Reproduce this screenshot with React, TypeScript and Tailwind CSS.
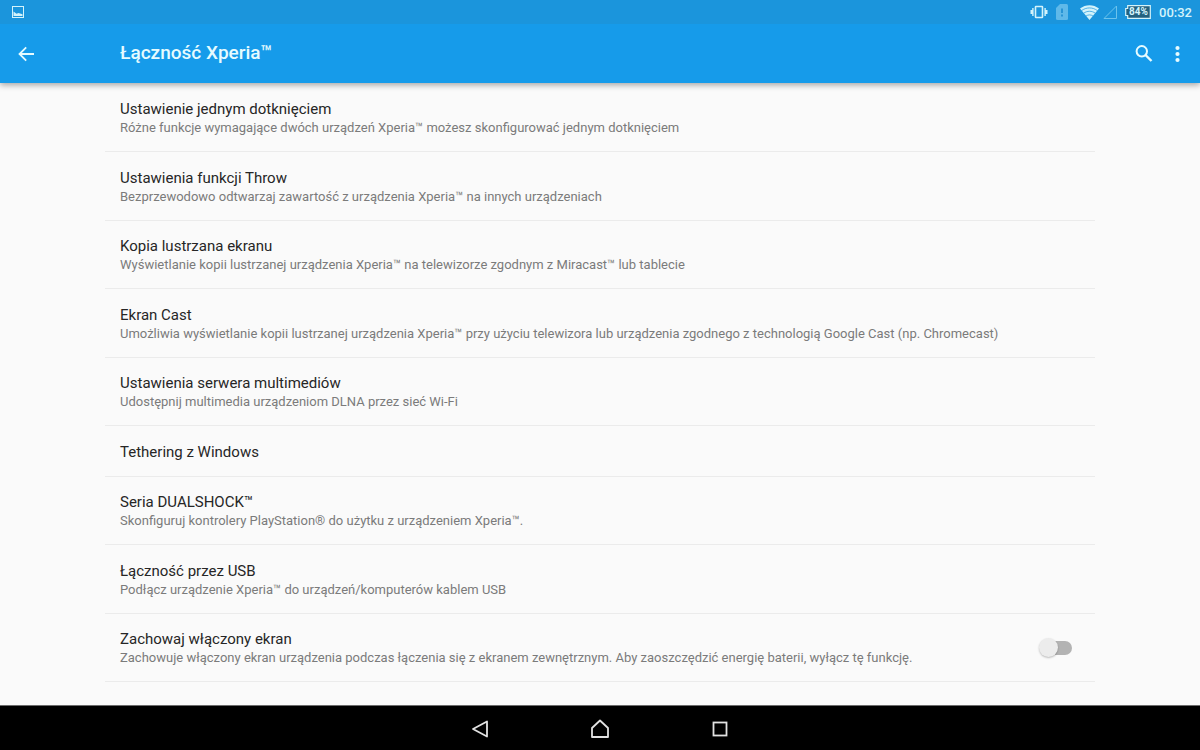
import React from 'react';

interface SettingRow {
  title: string;
  summary?: string;
}

const SETTINGS: SettingRow[] = [
  {
    title: 'Ustawienie jednym dotknięciem',
    summary: 'Różne funkcje wymagające dwóch urządzeń Xperia™ możesz skonfigurować jednym dotknięciem',
  },
  {
    title: 'Ustawienia funkcji Throw',
    summary: 'Bezprzewodowo odtwarzaj zawartość z urządzenia Xperia™ na innych urządzeniach',
  },
  {
    title: 'Kopia lustrzana ekranu',
    summary: 'Wyświetlanie kopii lustrzanej urządzenia Xperia™ na telewizorze zgodnym z Miracast™ lub tablecie',
  },
  {
    title: 'Ekran Cast',
    summary:
      'Umożliwia wyświetlanie kopii lustrzanej urządzenia Xperia™ przy użyciu telewizora lub urządzenia zgodnego z technologią Google Cast (np. Chromecast)',
  },
  {
    title: 'Ustawienia serwera multimediów',
    summary: 'Udostępnij multimedia urządzeniom DLNA przez sieć Wi-Fi',
  },
  { title: 'Tethering z Windows' },
  {
    title: 'Seria DUALSHOCK™',
    summary: 'Skonfiguruj kontrolery PlayStation® do użytku z urządzeniem Xperia™.',
  },
  {
    title: 'Łączność przez USB',
    summary: 'Podłącz urządzenie Xperia™ do urządzeń/komputerów kablem USB',
  },
];

const StatusBar: React.FC = () => (
  <div className="flex h-6 items-center justify-between bg-[#1b95dc] pl-3 pr-2 text-[#d3f3fb]">
    <svg width="12" height="12" viewBox="0 0 12 12" fill="none" aria-hidden="true">
      <rect x="0.5" y="0.5" width="11" height="11" stroke="currentColor" />
      <path d="M1.500 10V5.500l3 2.200L6.500 7l4 1.200V10z" fill="currentColor" />
    </svg>
    <div className="flex items-center">
      <svg className="mr-2" width="18" height="16" viewBox="0 0 18 16" fill="none" aria-hidden="true">
        <rect x="5.500" y="2.500" width="7" height="11" rx="0.500" stroke="currentColor" strokeWidth="1.600" />
        <path d="M3.600 4v8H2.200v-2H0.500V6h1.700V4zM14.400 4v8h1.400v-2h1.700V6h-1.700V4z" fill="currentColor" />
      </svg>
      <svg className="mr-3" width="12" height="16" viewBox="0 0 12 16" aria-hidden="true">
        <path d="M4 0h6.500A1.500 1.500 0 0 1 12 1.500v13a1.500 1.500 0 0 1-1.500 1.500h-9A1.500 1.500 0 0 1 0 14.500V4z" fill="#5fb9e9" />
        <path d="M6 4.500V9M6 10.500v2" stroke="#2391d3" strokeWidth="1.800" />
      </svg>
      <svg className="mr-1" width="19" height="16" viewBox="0 0 19 16" aria-hidden="true">
        <path d="M0 4.500C5.500 0 13.500 0 19 4.500L9.500 16z" fill="currentColor" />
        <path d="M1.500 6.700c4.700-3.700 11.300-3.700 16 0M3.500 9.300c3.600-2.700 8.400-2.700 12 0M6 12c2.200-1.500 4.800-1.500 7 0" fill="none" stroke="#1b95dc" strokeWidth="0.700" />
      </svg>
      <svg className="mr-2" width="14" height="14" viewBox="0 0 14 14" fill="none" aria-hidden="true">
        <path d="M13.500 1v12.500H1z" stroke="#6dc3ec" />
      </svg>
      <div className="relative mr-2 flex h-[14px] w-[26px] items-center justify-center">
        <svg className="absolute inset-0" width="26" height="14" viewBox="0 0 26 14" aria-hidden="true">
          <path d="M2.700 0.700h22.600v12.600H2.700V10.500H0.700v-7h2z" fill="#24617f" stroke="currentColor" strokeWidth="1.200" />
        </svg>
        <span className="relative pl-px text-[10px] font-bold leading-none">84%</span>
      </div>
      <span className="text-[13px] font-medium leading-none">00:32</span>
    </div>
  </div>
);

const Header: React.FC = () => (
  <header className="relative bg-[#169bea] text-[#e6fbff] shadow-[0_2px_6px_rgba(0,0,0,0.35)]">
    <StatusBar />
    <div className="flex h-[59px] items-center pl-4 pr-3">
      <button type="button" aria-label="Wstecz" className="w-[104px]">
        <svg width="20" height="20" viewBox="0 0 20 20" fill="none" stroke="currentColor" strokeWidth="1.800" aria-hidden="true">
          <path d="M18 10H4M10.200 3.300 3.500 10l6.700 6.700" />
        </svg>
      </button>
      <h1 className="flex-1 text-[19px] font-medium">Łączność Xperia™</h1>
      <button type="button" aria-label="Szukaj" className="mr-[14px]">
        <svg width="20" height="20" viewBox="0 0 20 20" fill="none" stroke="currentColor" aria-hidden="true">
          <circle cx="7.800" cy="7.300" r="5.200" strokeWidth="2" />
          <path d="m11.500 11 6 6" strokeWidth="2.400" />
        </svg>
      </button>
      <button type="button" aria-label="Więcej opcji">
        <svg width="20" height="20" viewBox="0 0 20 20" fill="currentColor" aria-hidden="true">
          <circle cx="9.500" cy="4" r="2.100" />
          <circle cx="9.500" cy="10" r="2.100" />
          <circle cx="9.500" cy="16" r="2.100" />
        </svg>
      </button>
    </div>
  </header>
);

const RowText: React.FC<SettingRow> = ({ title, summary }) => (
  <>
    <span className="block text-[15px] leading-5 text-[#262626]">{title}</span>
    {summary && <span className="block text-[13px] leading-[18px] text-[#7b7b7b]">{summary}</span>}
  </>
);

const NavBar: React.FC = () => (
  <nav className="flex h-[45px] items-center justify-center gap-[100px] border-t border-[#6b6b6b] bg-black pt-0.5 text-[#e2e2e2]">
    <button type="button" aria-label="Wstecz">
      <svg width="20" height="20" viewBox="0 0 20 20" fill="none" stroke="currentColor" strokeWidth="1.800" strokeLinejoin="round" aria-hidden="true">
        <path d="M17 2.500v15L3 10z" />
      </svg>
    </button>
    <button type="button" aria-label="Ekran główny">
      <svg width="20" height="20" viewBox="0 0 20 20" fill="none" stroke="currentColor" strokeWidth="1.800" strokeLinejoin="round" aria-hidden="true">
        <path d="M2 18V9l8-7.500L18 9v9z" />
      </svg>
    </button>
    <button type="button" aria-label="Ostatnie aplikacje">
      <svg width="20" height="20" viewBox="0 0 20 20" fill="none" stroke="currentColor" strokeWidth="1.800" aria-hidden="true">
        <rect x="3.500" y="3.500" width="13" height="13" />
      </svg>
    </button>
  </nav>
);

const App: React.FC = () => {
  return (
    <div className="flex min-h-screen flex-col bg-[#fafafa] font-[Roboto,sans-serif]">
      <Header />
      <main className="flex-1 px-[105px] pt-px">
        <ul>
          {SETTINGS.map((row) => (
            <li key={row.title} className="group border-b border-[#ebebeb]">
              <button
                type="button"
                className={
                  row.summary
                    ? 'block min-h-[67px] w-full px-[15px] pt-px text-left group-even:min-h-[68px]'
                    : 'block min-h-[50px] w-full px-[15px] pt-px text-left'
                }
              >
                <RowText {...row} />
              </button>
            </li>
          ))}
          <li className="border-b border-[#ebebeb]">
            <label className="flex min-h-[67px] cursor-pointer items-center justify-between pl-[15px] pr-[23px]">
              <span>
                <RowText
                  title="Zachowaj włączony ekran"
                  summary="Zachowuje włączony ekran urządzenia podczas łączenia się z ekranem zewnętrznym. Aby zaoszczędzić energię baterii, wyłącz tę funkcję."
                />
              </span>
              <span className="relative flex h-5 w-[33px] shrink-0 items-center">
                <input type="checkbox" role="switch" className="peer absolute inset-0 cursor-pointer appearance-none" />
                <span className="pointer-events-none ml-1 h-[14px] w-full rounded-full bg-[#b3b3b3] peer-checked:bg-[#8fcdf3]" />
                <span className="pointer-events-none absolute left-0 size-[19px] rounded-full bg-[#ececec] shadow-[0_1px_2px_rgba(0,0,0,0.25)] peer-checked:left-[14px] peer-checked:bg-[#169bea]" />
              </span>
            </label>
          </li>
        </ul>
      </main>
      <NavBar />
    </div>
  );
};

export default App;
